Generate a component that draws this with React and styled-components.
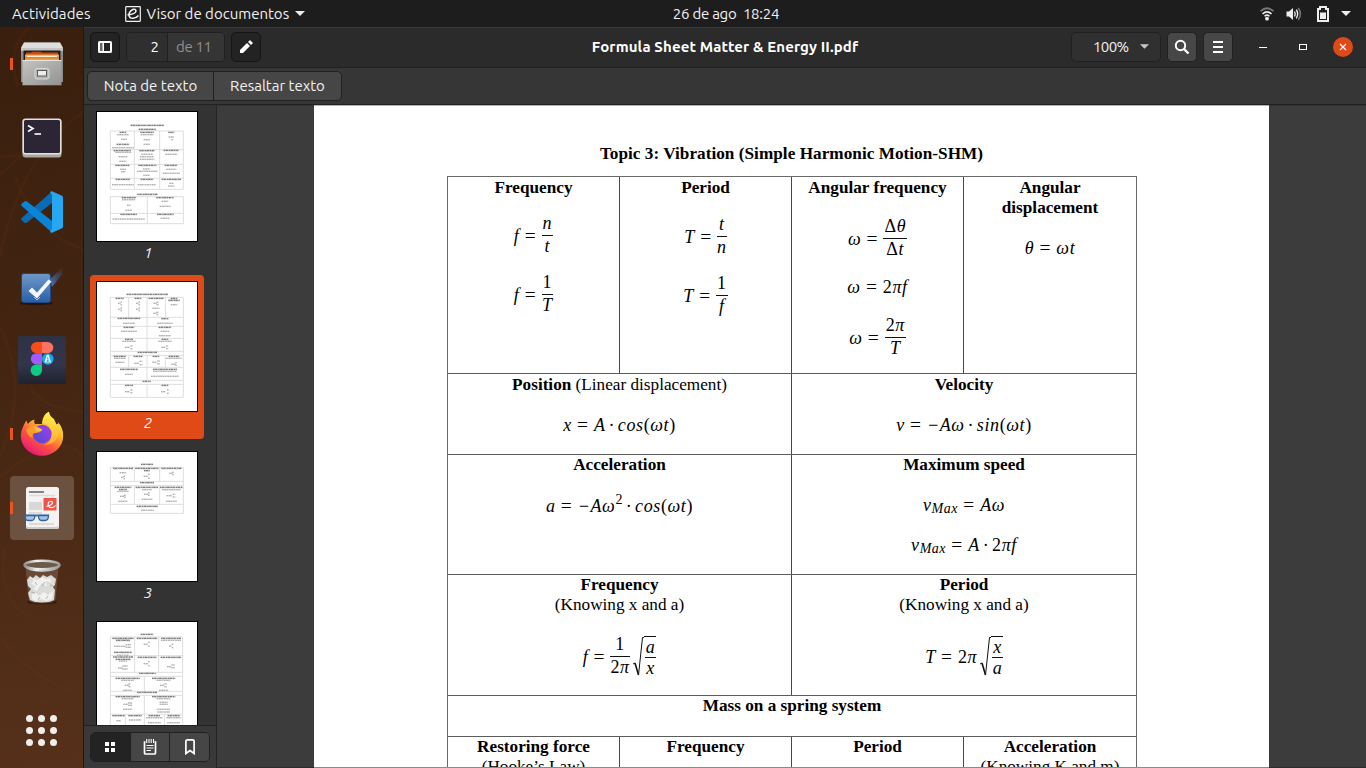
import React from 'react';
import styled, { createGlobalStyle } from 'styled-components';

const Global = createGlobalStyle`
  * { box-sizing: border-box; }
  html, body { margin: 0; padding: 0; width: 1366px; height: 768px; overflow: hidden; background: #1d1d1d; }
  svg { display: block; }
`;

const UI = '"Ubuntu", "Noto Sans", "Open Sans", sans-serif';
const SERIF = '"Liberation Serif", "Times New Roman", serif';

const Desktop = styled.div`
  width: 1366px;
  height: 768px;
  display: flex;
  flex-direction: column;
  overflow: hidden;
  font-family: ${UI};
  font-size: 15px;
  color: #f2f2f2;
`;

const Label = styled.span`
  white-space: pre;
  letter-spacing: ${(p) => p.$ls || 0}px;
  font-weight: ${(p) => (p.$bold ? 700 : 400)};
  font-size: 15px;
`;

/* ---------- top panel ---------- */
const TopBar = styled.header`
  height: 27px;
  flex: none;
  background: #1d1d1d;
  display: grid;
  grid-template-columns: 1fr auto 1fr;
  align-items: center;
  line-height: 26px;
`;
const TopLeft = styled.div`
  display: flex;
  align-items: center;
  padding-left: 12px;
`;
const AppMenu = styled.div`
  display: flex;
  align-items: center;
  margin-left: 34px;
  gap: 6px;
`;
const Clock = styled.div`
  padding-left: 86px;
`;
const TopRight = styled.div`
  display: flex;
  align-items: center;
  justify-content: flex-end;
  padding-right: 15px;
`;
const Tray = styled.span`
  display: block;
  margin-left: ${(p) => p.$gap}px;
`;

/* ---------- dock ---------- */
const Body = styled.div`
  flex: 1;
  display: flex;
  min-height: 0;
`;
const Dock = styled.nav`
  width: 84px;
  flex: none;
  position: relative;
  display: flex;
  flex-direction: column;
  background: linear-gradient(170deg, #3a1f0e 0%, #422411 40%, #4d2b16 72%, #56301a 100%);
  border-right: 1px solid #22160e;
`;
const DockArt = styled.svg`
  position: absolute;
  inset: 0;
`;
const DockItem = styled.div`
  position: relative;
  height: 74px;
  width: 84px;
  flex: none;
  display: flex;
  align-items: center;
  padding-left: 10px;
`;
const DockTile = styled.div`
  width: 64px;
  height: 64px;
  border-radius: 4px;
  display: flex;
  align-items: center;
  justify-content: center;
  background: ${(p) => (p.$active ? 'rgba(255,255,255,0.19)' : 'transparent')};
`;
const Running = styled.i`
  position: absolute;
  left: 10px;
  top: 31px;
  width: 3px;
  height: 12px;
  background: #e95420;
`;
const DockSpacer = styled.div`
  flex: 1;
`;
const AppsGrid = styled.div`
  position: relative;
  width: 31px;
  margin: 0 0 22px 26px;
  display: grid;
  grid-template-columns: repeat(3, 7px);
  gap: 5px;
  span {
    width: 7px;
    height: 7px;
    border-radius: 50%;
    background: #f0eeec;
  }
`;

/* ---------- window ---------- */
const Window = styled.main`
  flex: 1;
  display: flex;
  flex-direction: column;
  min-width: 0;
  background: #353535;
`;
const HeaderBar = styled.div`
  height: 41px;
  flex: none;
  display: flex;
  align-items: center;
  background: #2b2b2b;
  border-top: 1px solid #3a3a3a;
  border-bottom: 1px solid #212121;
  padding: 0 13px 2px 6px;
`;
const Btn = styled.div`
  height: 30px;
  width: 30px;
  display: flex;
  align-items: center;
  justify-content: center;
  border: 1px solid ${(p) => (p.$dark ? '#151515' : '#212121')};
  border-radius: 5px;
  background: ${(p) => (p.$dark ? '#232323' : '#474747')};
`;
const PageEntry = styled.div`
  display: flex;
  height: 30px;
  width: 99px;
  margin: 0 6px;
  border: 1px solid #202020;
  border-radius: 5px;
  overflow: hidden;
  line-height: 28px;
`;
const PageNo = styled.div`
  width: 41px;
  background: #2f2f2f;
  border-right: 1px solid #202020;
  text-align: right;
  padding-right: 8px;
  color: #fff;
`;
const PageTotal = styled.div`
  flex: 1;
  background: #353535;
  color: #8f8f8f;
  padding-left: 8px;
`;
const Title = styled.div`
  flex: 1;
  display: flex;
  justify-content: center;
  padding-left: 118px;
  color: #fff;
`;
const ZoomBox = styled.div`
  width: 90px;
  height: 30px;
  border: 1px solid #202020;
  border-radius: 5px;
  background: #303030;
  display: flex;
  align-items: center;
  padding: 0 11px 0 21px;
  justify-content: space-between;
`;
const HeaderRight = styled.div`
  display: flex;
  align-items: center;
  > * + * { margin-left: 6px; }
`;
const WinControls = styled.div`
  display: flex;
  align-items: center;
  padding-left: 14px;
  gap: 20px;
`;
const WinBtn = styled.div`
  width: 20px;
  height: 20px;
  border-radius: 50%;
  background: ${(p) => (p.$close ? '#e04a17' : 'transparent')};
`;
const NoteBar = styled.div`
  height: 37px;
  flex: none;
  display: flex;
  align-items: center;
  padding-left: 3px;
  background: #363636;
  border-bottom: 1px solid #222;
`;
const NoteButtons = styled.div`
  display: flex;
  height: 30px;
  border: 1px solid #212121;
  border-radius: 5px;
  background: #464646;
  line-height: 28px;
`;
const NoteButton = styled.div`
  width: ${(p) => p.$w}px;
  text-align: center;
  & + & { border-left: 1px solid #212121; }
`;
const Content = styled.div`
  flex: 1;
  display: flex;
  min-height: 0;
`;

/* ---------- sidebar ---------- */
const Sidebar = styled.aside`
  width: 133px;
  flex: none;
  display: flex;
  flex-direction: column;
  background: #333333;
  border-right: 1px solid #242424;
`;
const ThumbList = styled.div`
  flex: 1;
  min-height: 0;
  overflow: hidden;
`;
const ThumbItem = styled.div`
  width: 114px;
  height: 164px;
  margin: 0 0 6px 6px;
  padding: 6px 6px 0;
  border-radius: 4px;
  background: ${(p) => (p.$selected ? '#e04a17' : 'transparent')};
`;
const ThumbLabel = styled.div`
  text-align: center;
  font-style: italic;
  line-height: 22px;
  padding-left: 2px;
  color: #f4f4f4;
`;
const SideTools = styled.div`
  height: 43px;
  flex: none;
  padding: 6px;
  background: #393939;
  border-top: 1px solid #222;
`;
const Segments = styled.div`
  display: flex;
  height: 30px;
  width: 120px;
  border: 1px solid #202020;
  border-radius: 5px;
  overflow: hidden;
`;
const Segment = styled.div`
  flex: 1;
  display: flex;
  align-items: center;
  justify-content: center;
  background: ${(p) => (p.$on ? '#232323' : '#464646')};
  & + & { border-left: 1px solid #202020; }
`;

/* ---------- document ---------- */
const Viewer = styled.section`
  flex: 1;
  background: #3c3c3c;
  padding-left: 97px;
  overflow: hidden;
  box-shadow: inset 0 1px 0 #323232, inset 0 -1px 0 #2b2b2b;
`;
const Paper = styled.article`
  width: 955px;
  height: 663px;
  background: #fff;
  color: #000;
  padding: 38px 133px 0;
  font-family: ${SERIF};
  font-size: 17.2px;
  line-height: 20px;
  border-top: 1px solid #b5b5b5;
  border-bottom: 1px solid #8a8a8a;
  overflow: hidden;
`;
const Heading = styled.h1`
  margin: 0 0 12px;
  font-size: 17.2px;
  letter-spacing: 0.03px;
  font-weight: 700;
  text-align: center;
  line-height: 20px;
  white-space: nowrap;
`;
const Table = styled.div`
  width: 690px;
  border: 1px solid #6a6a6a;
  border-bottom: 0;
`;
const Row = styled.div`
  display: grid;
  height: ${(p) => p.$h}px;
  grid-template-columns: ${(p) => p.$cols};
  & + & { border-top: 1px solid #5c5c5c; }
`;
const Cell = styled.div`
  display: flex;
  flex-direction: column;
  align-items: center;
  text-align: center;
  white-space: nowrap;
  padding-top: ${(p) => p.$pt || 0}px;
  & + & { border-left: 1px solid #484848; }
`;
const Strong = styled.b`
  display: block;
`;
const Plain = styled.span`
  font-weight: 400;
`;
const Eq = styled.div`
  display: flex;
  align-items: center;
  height: ${(p) => p.$h || 20}px;
  margin-top: ${(p) => p.$mt || 0}px;
  font-style: italic;
  font-size: 18px;
  letter-spacing: 0.6px;
  white-space: pre;
`;
const Up = styled.span`
  font-style: normal;
`;
const Equals = styled.span`
  font-style: normal;
  font-size: 19.5px;
  margin: 0 5.3px 0 5.3px;
`;
const Dot = styled.span`
  font-style: normal;
  margin: 0 2.8px;
`;
const FracBox = styled.span`
  display: inline-flex;
  flex-direction: column;
  align-items: center;
`;
const Num = styled.span`
  height: ${(p) => p.$h || 20}px;
  line-height: ${(p) => p.$lh || 14}px;
  padding: 0 1px;
  align-self: stretch;
  text-align: center;
  border-bottom: 1px solid #111;
`;
const Den = styled.span`
  height: 20px;
  line-height: 21px;
`;
const Small = styled.span`
  font-size: 14px;
  letter-spacing: 0.5px;
  position: relative;
  top: ${(p) => p.$y}px;
`;
const RootBox = styled.span`
  display: flex;
  align-items: center;
  margin-left: 3px;
`;
const RootBody = styled.span`
  border-top: 1px solid #111;
  padding-left: 1px;
`;

const Frac = ({ n, d, h, lh }) => (
  <FracBox>
    <Num $h={h} $lh={lh}>{n}</Num>
    <Den>{d}</Den>
  </FracBox>
);
const Root = ({ children }) => (
  <RootBox>
    <svg width="11" height="40" viewBox="0 0 11 40" fill="none" stroke="#111">
      <path d="M0 27 L2 26" strokeWidth="1" />
      <path d="M2 26 L5.500 38" strokeWidth="1.600" />
      <path d="M5.500 38 L9.500 0.500 H11" strokeWidth="1" />
    </svg>
    <RootBody>{children}</RootBody>
  </RootBox>
);

/* ---------- page thumbnails ---------- */
const thumbs = [
  {
    h: [[93, 79, 298], [149, 79, 298], [193, 79, 298], [235, 79, 298], [268, 79, 298], [290, 79, 298], [340, 79, 298], [371, 79, 298]],
    v: [[79, 93, 268], [151, 93, 268], [227, 93, 268], [298, 93, 268], [79, 290, 371], [190, 290, 371], [298, 290, 371]],
    b: [[190, 76, 100], [190, 88, 52], [117, 97, 20], [189, 97, 40], [262, 97, 18], [117, 133, 38], [115, 152, 52], [189, 152, 46], [261, 151, 44], [115, 196, 42], [190, 196, 54], [261, 196, 38], [116, 238, 42], [189, 238, 38], [262, 238, 58], [190, 283, 60], [134, 293, 42], [243, 293, 52], [134, 343, 50], [244, 343, 50]],
    t: [[117, 104, 35], [189, 104, 38], [120, 118, 18], [189, 119, 20], [262, 111, 16], [265, 119, 6], [189, 133, 20], [117, 143, 66], [118, 157, 48], [117, 170, 26], [189, 163, 34], [189, 170, 42], [189, 178, 44], [262, 163, 36], [117, 184, 22], [117, 208, 18], [118, 215, 14], [188, 207, 22], [190, 214, 62], [188, 226, 20], [262, 208, 30], [262, 220, 52], [117, 254, 66], [188, 254, 54], [262, 250, 12], [262, 258, 20], [134, 299, 40], [134, 316, 10], [134, 331, 20], [243, 304, 20], [243, 319, 32], [134, 357, 96], [243, 355, 26]],
  },
  {
    h: [82, 142, 169, 205, 244, 256, 292, 331, 343, 382].map((y) => [y, 79, 298]),
    v: [[79, 82, 382], [298, 82, 382], [134, 82, 142], [189, 82, 244], [244, 82, 142], [134, 256, 292], [189, 256, 331], [244, 256, 292], [189, 343, 382]],
    b: [[190, 73, 124], [107, 85, 24], [162, 85, 20], [216, 85, 44], [270, 85, 20], [270, 91, 34], [135, 145, 68], [243, 146, 22], [135, 172, 32], [243, 172, 38], [135, 208, 24], [243, 208, 20], [190, 247, 58], [107, 259, 36], [162, 259, 26], [216, 259, 20], [270, 259, 32], [135, 298, 54], [243, 298, 72], [188, 334, 24], [135, 346, 24], [243, 346, 20]],
    t: [[106, 100, 8], [112, 96, 4], [112, 104, 4], [106, 118, 8], [112, 114, 4], [112, 122, 4], [160, 100, 8], [166, 96, 4], [166, 104, 4], [160, 118, 8], [166, 114, 4], [166, 122, 4], [213, 100, 10], [221, 97, 7], [221, 104, 7], [216, 115, 22], [213, 130, 10], [221, 127, 7], [221, 134, 5], [270, 104, 20], [135, 160, 36], [243, 160, 46], [135, 184, 48], [243, 184, 26], [243, 197, 36], [135, 214, 40], [243, 214, 40], [130, 232, 14], [143, 228, 7], [143, 236, 7], [238, 232, 12], [250, 228, 7], [250, 236, 7], [107, 265, 34], [108, 277, 26], [158, 280, 14], [171, 274, 8], [171, 284, 8], [211, 277, 12], [224, 273, 8], [224, 281, 8], [270, 265, 46], [268, 283, 12], [276, 278, 4], [276, 286, 4], [135, 313, 24], [243, 304, 70], [243, 319, 84], [130, 365, 14], [143, 360, 7], [143, 368, 7], [238, 365, 14], [252, 360, 6], [252, 370, 6]],
  },
  {
    h: [82, 124, 137, 193, 220].map((y) => [y, 79, 298]),
    v: [[79, 82, 220], [298, 82, 220], [151, 82, 124], [227, 82, 124], [151, 137, 193], [227, 137, 193]],
    b: [[189, 73, 36], [117, 85, 60], [189, 85, 70], [262, 85, 60], [189, 92, 18], [189, 128, 42], [117, 142, 50], [117, 149, 24], [189, 142, 68], [262, 142, 68], [190, 199, 64]],
    t: [[117, 98, 20], [115, 112, 8], [121, 109, 4], [121, 116, 4], [185, 109, 12], [195, 103, 6], [195, 115, 6], [260, 100, 10], [267, 97, 5], [267, 104, 5], [117, 154, 34], [189, 149, 30], [262, 149, 56], [114, 169, 12], [123, 166, 6], [123, 172, 6], [186, 163, 12], [195, 158, 6], [195, 166, 6], [256, 167, 16], [270, 163, 8], [270, 171, 8], [117, 184, 28], [189, 178, 32], [262, 184, 32], [190, 211, 38]],
  },
  {
    h: [81, 137, 187, 199, 244, 256, 313].map((y) => [y, 79, 296]),
    v: [[79, 81, 380], [296, 81, 380], [152, 81, 187], [224, 81, 187], [181, 199, 244], [181, 256, 380], [124, 313, 380], [241, 313, 380]],
    b: [[189, 73, 38], [117, 85, 64], [117, 91, 42], [189, 85, 62], [261, 85, 60], [117, 127, 54], [117, 141, 60], [117, 148, 44], [189, 142, 56], [261, 142, 62], [190, 190, 50], [131, 205, 72], [239, 205, 70], [189, 247, 60], [131, 260, 72], [239, 260, 70], [104, 317, 38], [153, 317, 40], [211, 317, 34], [269, 317, 36]],
    t: [[261, 91, 60], [107, 109, 34], [133, 104, 16], [133, 112, 16], [185, 103, 12], [195, 97, 5], [195, 109, 5], [259, 108, 8], [266, 103, 5], [266, 113, 5], [117, 136, 36], [117, 153, 24], [109, 174, 14], [123, 168, 16], [123, 177, 16], [185, 161, 12], [195, 155, 5], [195, 167, 5], [255, 170, 12], [267, 165, 10], [267, 173, 10], [131, 211, 38], [239, 211, 42], [128, 226, 12], [137, 222, 6], [137, 230, 6], [234, 226, 12], [245, 222, 8], [245, 230, 8], [131, 241, 28], [239, 241, 28], [131, 266, 36], [239, 266, 42], [125, 283, 14], [138, 279, 12], [138, 286, 12], [239, 277, 24], [239, 283, 24], [131, 298, 28], [239, 298, 38], [239, 306, 38], [211, 323, 50], [269, 323, 44], [104, 332, 14], [153, 330, 36], [211, 338, 38], [269, 338, 38]],
  },
];

const strokesOf = (items) => items.map(([x, y, w]) => `M${x - w / 2} ${y}H${x + w / 2}`).join('');

const Thumb = ({ data }) => (
  <svg width="102" height="131" viewBox="36 33 306 393">
    <rect x="37.500" y="34.500" width="303" height="390" fill="#fff" stroke="#000" strokeWidth="3" />
    <g stroke="#dedede" strokeWidth="3">
      {data.h.map(([y, a, b], i) => <path key={i} d={`M${a} ${y}H${b}`} />)}
      {data.v.map(([x, a, b], i) => <path key={'v' + i} d={`M${x} ${a}V${b}`} />)}
    </g>
    <path d={strokesOf(data.b)} stroke="#c4c4c4" strokeWidth="5" />
    <path d={strokesOf(data.b)} stroke="#555" strokeWidth="2.400" strokeDasharray="4 2.500 6 4 3 2 7 3" />
    <path d={strokesOf(data.t)} stroke="#dadada" strokeWidth="4.500" />
    <path d={strokesOf(data.t)} stroke="#9a9a9a" strokeWidth="2.400" strokeDasharray="4 3 5 2.500 3 4" />
  </svg>
);

/* ---------- icons ---------- */
const Caret = ({ w = 10, c = '#eee' }) => (
  <svg width={w} height="5" viewBox="0 0 10 5"><path d="M0 0H10L5 5Z" fill={c} /></svg>
);

const FilesIcon = () => (
  <svg width="44" height="46" viewBox="0 0 44 46">
    <defs>
      <linearGradient id="cab" x1="0" y1="0" x2="1" y2="1"><stop offset="0" stopColor="#c4c4c2" /><stop offset="1" stopColor="#929290" /></linearGradient>
    </defs>
    <path d="M4 1.500H40L43 7V41H1V7Z" fill="#8c8c8a" />
    <path d="M4 1.500H40L43 7H1Z" fill="#dededc" />
    <path d="M1 7H43V10H1Z" fill="#c4c4c2" />
    <rect x="3.500" y="9.500" width="37" height="10" fill="#231d19" />
    <path d="M6 11.500H11L12 10.800H21L22 11.500H38V19H6Z" fill="#c94a18" />
    <rect x="5" y="13.500" width="34" height="6" fill="#f0a04a" />
    <rect x="7" y="14.700" width="30" height="1.500" fill="#fff0c8" />
    <rect x="5" y="16.200" width="34" height="1.300" fill="#dc7a28" />
    <path d="M2.500 19H41.500V44.500H2.500Z" fill="url(#cab)" />
    <path d="M2.500 19.500H41.500" stroke="#e4e4e2" />
    <path d="M3 44.500H41" stroke="#42321f" opacity=".6" />
    <rect x="15" y="27.500" width="14" height="10.500" rx="2" fill="#b4b4b2" stroke="#d8d8d6" />
    <rect x="17.500" y="29.500" width="9" height="5.500" fill="#ededeb" stroke="#5a5a58" />
  </svg>
);
const TerminalIcon = () => (
  <svg width="40" height="40" viewBox="0 0 40 40">
    <rect x="0.500" y="1" width="39" height="38.500" rx="3" fill="#a9a7a2" />
    <rect x="0.500" y="0.500" width="39" height="36" rx="3" fill="#e4e2dd" />
    <rect x="2" y="2" width="36" height="33" rx="1.500" fill="#2b2535" />
    <path d="M6 7.500L11 10.500L6 13.500" fill="none" stroke="#fff" strokeWidth="1.600" />
    <path d="M12.500 16H19" stroke="#fff" strokeWidth="1.600" />
  </svg>
);
const CodeIcon = () => (
  <svg width="42" height="42" viewBox="0 0 42 42">
    <path d="M31 0.500L0.700 27Q-0.300 28 .6 29.200L3.700 31.700Q5 32.300 6 31.500L31 12Z" fill="#0b6cb3" />
    <path d="M31 41.500L0.700 15Q-0.300 13.800 .6 12.800L3.700 10.200Q5 9.700 6 10.500L31 30Z" fill="#0a84d6" />
    <path d="M31 0.200L41 4.800Q42 5.300 42 6.500V35.500Q42 36.700 41 37.200L31 41.800Q29.800 42 29 40.800L31 38V4L29 1.200Q29.800 0 31 .2Z" fill="#27a7f2" />
  </svg>
);
const TodoIcon = () => (
  <svg width="44" height="40" viewBox="0 0 44 40">
    <defs>
      <linearGradient id="todo" x1="0" y1="0" x2="0" y2="1"><stop offset="0" stopColor="#7099cb" /><stop offset="1" stopColor="#2a5fa6" /></linearGradient>
      <linearGradient id="pen" x1="0" y1="1" x2="1" y2="0"><stop offset="0" stopColor="#4d7cc0" /><stop offset="1" stopColor="#3a4f80" stopOpacity=".15" /></linearGradient>
    </defs>
    <ellipse cx="16" cy="37" rx="17" ry="2.200" fill="#1d0f07" opacity=".7" />
    <rect x="1.500" y="7.500" width="29" height="29" rx="2.500" fill="url(#todo)" stroke="#1f4684" />
    <path d="M30 13L42.500 1.500V8L32 21Z" fill="url(#pen)" />
    <path d="M8.500 25L12 21.500L17 26.500L28.500 13.500L31.500 15.500L17 32.500Z" fill="#f5f5f5" />
    <path d="M14 31L17 34L20 31" fill="none" stroke="#c7d6ea" strokeWidth=".8" />
  </svg>
);
const FigmaIcon = () => (
  <svg width="48" height="48" viewBox="0 0 48 48">
    <defs>
      <linearGradient id="fig" x1="0" y1="0" x2="0" y2="1"><stop offset="0" stopColor="#2f3245" /><stop offset=".6" stopColor="#33364a" /><stop offset="1" stopColor="#20222f" /></linearGradient>
    </defs>
    <rect width="48" height="48" rx="2.500" fill="url(#fig)" />
    <path d="M24 6H18.500A5.600 5.600 0 0 0 18.500 17.200H24Z" fill="#f24e1e" />
    <path d="M24 6H29.700A5.600 5.600 0 0 1 29.700 17.200H24Z" fill="#ff7262" />
    <path d="M24 17.200H18.500A5.600 5.600 0 0 0 18.500 28.500H24Z" fill="#a259ff" />
    <path d="M24 28.500H18.500A5.700 5.700 0 1 0 24 34.200Z" fill="#0acf83" />
    <circle cx="29.800" cy="23" r="5.800" fill="#18a8f0" />
    <path d="M29.500 19L27.200 26.500M30.100 19L32.400 26.500" stroke="#fff" strokeWidth="1.300" />
    <circle cx="29.800" cy="25" r="1.500" fill="none" stroke="#fff" strokeWidth=".7" />
  </svg>
);
const FirefoxIcon = () => (
  <svg width="44" height="47" viewBox="0 0 44 47">
    <defs>
      <linearGradient id="ff1" x1=".85" y1=".05" x2=".25" y2="1"><stop offset="0" stopColor="#fff14a" /><stop offset=".35" stopColor="#ffb52e" /><stop offset=".62" stopColor="#ff5a3c" /><stop offset="1" stopColor="#e5127d" /></linearGradient>
      <linearGradient id="ff2" x1="1" y1="0" x2="0" y2="1"><stop offset="0" stopColor="#a43cf0" /><stop offset="1" stopColor="#4a4fc8" /></linearGradient>
      <linearGradient id="ff3" x1="0" y1="0" x2="0" y2="1"><stop offset="0" stopColor="#fff24d" /><stop offset="1" stopColor="#ffb02e" /></linearGradient>
    </defs>
    <path d="M3 16Q5 11 6.500 9.500Q7 11.500 8 13Q10 9.500 14.500 8.500Q13.500 11 15 13L22 13Q23 3 29 0.800Q29 4.500 34 8L36 13.500L38.500 12.500L37.500 10.500Q43.500 17 43.200 25A21.200 19.800 0 0 1 .8 25Q.7 20 3 16Z" fill="url(#ff1)" />
    <path d="M29 0.800Q23 3.500 22 12Q31 13 31.500 22Q32 31 24 34Q38 33 38 22Q38 13 33 8Q29 5 29 .8Z" fill="url(#ff3)" opacity=".85" />
    <circle cx="22.300" cy="23" r="9.300" fill="url(#ff2)" />
    <path d="M6 19Q11 13 16 15Q20 18 22.500 18.500Q21 21.500 16 22Q11 22 13 27Q7 25 6 19Z" fill="#ff9a2c" />
    <path d="M14 15.500Q20 17 22.500 18.700Q20 20.500 16 20.500Z" fill="#ffc04a" />
  </svg>
);
const EvinceIcon = () => (
  <svg width="40" height="44" viewBox="0 0 40 44">
    <rect x="4" y="1" width="33" height="42" rx="2.500" fill="#f4f3f1" />
    <path d="M4 39V40.500Q4 43 6.500 43H34.500Q37 43 37 40.500V39Q37 41 34.500 41H6.500Q4 41 4 39Z" fill="#cfccc8" />
    <path d="M7 6H22" stroke="#6b6870" strokeWidth="1.600" />
    <path d="M7 9.500H33" stroke="#dddbd8" strokeWidth="1.500" />
    <rect x="7" y="16" width="13" height="8" fill="#dad8d5" />
    <path d="M7 27H20M7 38H32" stroke="#dddbd8" strokeWidth="2" />
    <rect x="21.500" y="12" width="13" height="12.500" fill="#ee5548" />
    <path d="M24.500 20.500Q30.500 19.500 30.500 16.300Q29 14 26.500 16.500Q25 21 29 21.500Q31.500 22 33.500 19.500" fill="none" stroke="#fff" strokeWidth="1.100" />
    <path d="M2 29.500H27" stroke="#2f65a8" strokeWidth="1.800" />
    <path d="M3.500 29.500Q3 34.500 6 34.500H9.500Q12.500 34.500 13 29.500ZM16.500 29.500Q16.500 34.500 19.500 34.500H23Q26.500 34.500 26.500 29.500Z" fill="#a9c3e0" stroke="#2f65a8" strokeWidth="1.300" />
  </svg>
);
const TrashIcon = () => (
  <svg width="40" height="48" viewBox="0 0 40 48">
    <defs><linearGradient id="rim" x1="0" x2="1" y1="0" y2="0"><stop offset="0" stopColor="#8f8f8d" /><stop offset=".35" stopColor="#f2f2f0" /><stop offset="1" stopColor="#9b9b99" /></linearGradient></defs>
    <ellipse cx="20" cy="44" rx="15" ry="2.500" fill="#1f1008" opacity=".6" />
    <path d="M4 9L7 42Q8 45 20 45Q32 45 33 42L36 9Z" fill="#9b8473" opacity=".35" stroke="#b09a8a" strokeWidth=".7" />
    <path d="M5 22L8 18L11 20L14 17L18 20L21 17L25 19L29 17L34 21L33 27L31 29L33 32L32 42Q28 44.500 20 44.500Q12 44.500 8 42L6 35L9 31L6 28Z" fill="#dadad8" />
    <path d="M8 20L12 22L9 26L14 28L11 31L15 33L17 29L20 25L25 29L24 23L30 25L28 20L24 21L20 19L16 22ZM10 36L14 35L17 38L22 34L26 37L31 33L30 41L24 43L20 41L14 43L10 41Z" fill="#f1f1ef" />
    <path d="M13 24L15 27M23 24L20 28M28 27L31 28M9 34L13 35M18 39L16 42M26 38L24 41" stroke="#b0b0ae" strokeWidth="1" />
    <ellipse cx="20" cy="7" rx="17.500" ry="4.300" fill="#6c5a4d" stroke="url(#rim)" strokeWidth="2.500" />
    <path d="M2.500 7.500Q5 13 20 13Q35 13 37.500 7.500" fill="none" stroke="url(#rim)" strokeWidth="1.500" />
  </svg>
);

const dock = [
  { Icon: FilesIcon, run: true },
  { Icon: TerminalIcon },
  { Icon: CodeIcon },
  { Icon: TodoIcon },
  { Icon: FigmaIcon },
  { Icon: FirefoxIcon, run: true },
  { Icon: EvinceIcon, run: true, active: true },
  { Icon: TrashIcon },
];

const FOUR = '171px 172px 172px 173px';
const TWO = '343px 345px';

export default function App() {
  return (
    <Desktop>
      <Global />
      <TopBar>
        <TopLeft>
          <Label $ls={0.12}>Actividades</Label>
          <AppMenu>
            <svg width="16" height="16" viewBox="0 0 16 16" fill="none" stroke="#f2f2f2">
              <rect x="0.700" y="0.700" width="14.600" height="14.600" rx="0.500" strokeWidth="1.200" />
              <path d="M2.500 8.700Q10.500 8.300 11 5Q10.500 2.500 7.800 3.500Q4 5.500 4 9Q4.200 12.500 8 12.300Q11.500 12 13.500 9.500" strokeWidth="1.600" />
            </svg>
            <Label>Visor de documentos</Label>
            <Caret w={10} />
          </AppMenu>
        </TopLeft>
        <Clock><Label $ls={-0.25}>26 de ago  18:24</Label></Clock>
        <TopRight>
          <Tray $gap={0}>
            <svg width="14" height="14" viewBox="0 0 14 14" fill="none">
              <path d="M.5 4.200Q7 -1.600 13.500 4.200" stroke="#777" strokeWidth="1.800" />
              <path d="M2.500 7Q7 2.800 11.500 7" stroke="#eee" strokeWidth="1.700" />
              <path d="M4.500 9.200Q7 7 9.500 9.200" stroke="#eee" strokeWidth="1.500" />
              <circle cx="7" cy="11.700" r="1.900" fill="#eee" />
            </svg>
          </Tray>
          <Tray $gap={12}>
            <svg width="16" height="14" viewBox="0 0 16 14" fill="none">
              <path d="M.5 4.500H3L7 1V13L3 9.500H.5Z" fill="#eee" />
              <path d="M8.500 4.500Q10 7 8.500 9.500M10.300 2.700Q13 7 10.300 11.300" stroke="#eee" strokeWidth="1.400" />
              <path d="M12.300 1Q16.500 7 12.300 13" stroke="#777" strokeWidth="1.500" />
            </svg>
          </Tray>
          <Tray $gap={15}>
            <svg width="12" height="16" viewBox="0 0 12 16">
              <path d="M3 1H9V3H11V15H1V3H3Z" fill="none" stroke="#eee" strokeWidth="2" />
              <rect x="3" y="6.500" width="6" height="6.500" fill="#eee" />
            </svg>
          </Tray>
          <Tray $gap={12}><Caret w={10} /></Tray>
        </TopRight>
      </TopBar>

      <Body>
        <Dock>
          <DockArt width="83" height="741" viewBox="0 0 83 741" fill="none" stroke="#6b3516" strokeWidth="3" opacity=".16">
            <path d="M30 0Q5 20 18 60M83 85Q20 130 0 230M0 130L22 128L0 148M15 150Q40 210 83 222M0 300Q30 360 0 430M30 360Q40 380 83 385M0 450Q60 400 83 430M5 520Q-5 570 30 590M0 610Q40 660 83 665M30 670Q70 680 83 741" />
          </DockArt>
          {dock.map(({ Icon, run, active }, i) => (
            <DockItem key={i}>
              <DockTile $active={active}><Icon /></DockTile>
              {run && <Running />}
            </DockItem>
          ))}
          <DockSpacer />
          <AppsGrid>{Array.from({ length: 9 }, (_, i) => <span key={i} />)}</AppsGrid>
        </Dock>

        <Window>
          <HeaderBar>
            <Btn $dark>
              <svg width="14" height="12" viewBox="0 0 14 12">
                <path d="M1.500 0H12.500Q14 0 14 1.500V10.500Q14 12 12.500 12H1.500Q0 12 0 10.500V1.500Q0 0 1.500 0ZM6 2V10H12V2Z" fill="#fff" fillRule="evenodd" />
                <rect x="2" y="2" width="2.500" height="8" fill="#666" />
              </svg>
            </Btn>
            <PageEntry>
              <PageNo><Label>2</Label></PageNo>
              <PageTotal><Label $ls={-0.35}>de 11</Label></PageTotal>
            </PageEntry>
            <Btn $dark>
              <svg width="14" height="14" viewBox="0 0 14 14" fill="#fff">
                <path d="M1 13V10L8 3L11 6L4 13Z" />
                <path d="M9 2L10.500 .5Q11 0 11.500 .5L13.500 2.500Q14 3 13.500 3.500L12 5Z" />
              </svg>
            </Btn>
            <Title><Label $bold $ls={0.12}>Formula Sheet Matter &amp; Energy II.pdf</Label></Title>
            <HeaderRight>
              <ZoomBox><Label $ls={-0.6}>100%</Label><Caret w={9} c="#c8c8c8" /></ZoomBox>
              <Btn>
                <svg width="16" height="16" viewBox="0 0 16 16" fill="none" stroke="#fff">
                  <circle cx="6.500" cy="6.500" r="4.700" strokeWidth="2" />
                  <path d="M10 10L14.500 14.500" strokeWidth="2.400" />
                </svg>
              </Btn>
              <Btn>
                <svg width="10" height="12" viewBox="0 0 10 12"><path d="M0 1H10M0 6H10M0 11H10" stroke="#fff" strokeWidth="2" /></svg>
              </Btn>
              <WinControls>
                <WinBtn><svg width="20" height="20"><path d="M6 10.500H14" stroke="#fff" /></svg></WinBtn>
                <WinBtn><svg width="20" height="20"><rect x="6.500" y="7.500" width="7" height="5" fill="none" stroke="#fff" /></svg></WinBtn>
                <WinBtn $close><svg width="20" height="20"><path d="M7 7L13 13M13 7L7 13" stroke="#fff" strokeWidth="1.100" /></svg></WinBtn>
              </WinControls>
            </HeaderRight>
          </HeaderBar>

          <NoteBar>
            <NoteButtons>
              <NoteButton $w={125}><Label>Nota de texto</Label></NoteButton>
              <NoteButton $w={128}><Label>Resaltar texto</Label></NoteButton>
            </NoteButtons>
          </NoteBar>

          <Content>
            <Sidebar>
              <ThumbList>
                {thumbs.map((data, i) => (
                  <ThumbItem key={i} $selected={i === 1}>
                    <Thumb data={data} />
                    {i < 3 && <ThumbLabel>{i + 1}</ThumbLabel>}
                  </ThumbItem>
                ))}
              </ThumbList>
              <SideTools>
                <Segments>
                  <Segment $on>
                    <svg width="10" height="10" viewBox="0 0 10 10" fill="#fff"><path d="M0 0H4V4H0ZM6 0H10V4H6ZM0 6H4V10H0ZM6 6H10V10H6Z" /></svg>
                  </Segment>
                  <Segment>
                    <svg width="14" height="16" viewBox="0 0 14 16" fill="none" stroke="#fff">
                      <path d="M2.500 3H1.500V14Q1.500 15 2.500 15H11.500Q12.500 15 12.500 14V3H11.500" strokeWidth="1.700" />
                      <path d="M3.700 0V4M6 0V4M8.200 0V4M10.500 0V4" strokeWidth="1.100" />
                      <path d="M3.500 6.500H10.500M3.500 9H10.500M3.500 11.500H8" strokeWidth="1.200" />
                    </svg>
                  </Segment>
                  <Segment>
                    <svg width="10" height="16" viewBox="0 0 10 16" fill="none" stroke="#fff" strokeWidth="1.700">
                      <path d="M.9 2.300Q.9 .9 2.300 .9H7.700Q9.100 .9 9.100 2.300V14.500L5 11.500L.9 14.500Z" />
                    </svg>
                  </Segment>
                </Segments>
              </SideTools>
            </Sidebar>

            <Viewer>
              <Paper>
                <Heading>Topic 3: Vibration (Simple Harmonic Motion-SHM)</Heading>
                <Table>
                  <Row $h={196} $cols={FOUR}>
                    <Cell $pt={1}>
                      <Strong>Frequency</Strong>
                      <Eq $h={41} $mt={17}>f<Equals>=</Equals><Frac n="n" d="t" /></Eq>
                      <Eq $h={41} $mt={18}>f<Equals>=</Equals><Frac n={<Up>1</Up>} d="T" /></Eq>
                    </Cell>
                    <Cell $pt={1}>
                      <Strong>Period</Strong>
                      <Eq $h={41} $mt={18}>T<Equals>=</Equals><Frac n="t" d="n" /></Eq>
                      <Eq $h={41} $mt={18}>T<Equals>=</Equals><Frac n={<Up>1</Up>} d="f" /></Eq>
                    </Cell>
                    <Cell $pt={1}>
                      <Strong>Angular frequency</Strong>
                      <Eq $h={41} $mt={20}>ω<Equals>=</Equals><Frac n={<><Up>Δ</Up>θ</>} d={<><Up>Δ</Up>t</>} /></Eq>
                      <Eq $mt={18}>ω<Equals>=</Equals><Up>2</Up>πf</Eq>
                      <Eq $h={41} $mt={20}>ω<Equals>=</Equals><Frac n={<><Up>2</Up>π</>} d="T" /></Eq>
                    </Cell>
                    <Cell $pt={1}>
                      <Strong>Angular<br />displacement</Strong>
                      <Eq $mt={20}>θ<Equals>=</Equals>ωt</Eq>
                    </Cell>
                  </Row>
                  <Row $h={81} $cols={TWO}>
                    <Cell $pt={1}>
                      <Strong>Position <Plain>(Linear displacement)</Plain></Strong>
                      <Eq $mt={20}>x<Equals>=</Equals>A<Dot>·</Dot>cos<Up>(</Up>ωt<Up>)</Up></Eq>
                    </Cell>
                    <Cell $pt={1}>
                      <Strong>Velocity</Strong>
                      <Eq $mt={20}>v<Equals>=</Equals>−Aω<Dot>·</Dot>sin<Up>(</Up>ωt<Up>)</Up></Eq>
                    </Cell>
                  </Row>
                  <Row $h={120} $cols={TWO}>
                    <Cell>
                      <Strong>Acceleration</Strong>
                      <Eq $mt={21}>a<Equals>=</Equals>−Aω<Small $y={-6}><Up>2</Up></Small><Dot>·</Dot>cos<Up>(</Up>ωt<Up>)</Up></Eq>
                    </Cell>
                    <Cell>
                      <Strong>Maximum speed</Strong>
                      <Eq $mt={20}>v<Small $y={4}>Max</Small><Equals>=</Equals>Aω</Eq>
                      <Eq $mt={20}>v<Small $y={4}>Max</Small><Equals>=</Equals>A<Dot>·</Dot><Up>2</Up>πf</Eq>
                    </Cell>
                  </Row>
                  <Row $h={121} $cols={TWO}>
                    <Cell>
                      <Strong>Frequency</Strong>
                      <Plain>(Knowing x and a)</Plain>
                      <Eq $h={41} $mt={21}>f<Equals>=</Equals><Frac n={<Up>1</Up>} d={<><Up>2</Up>π</>} /><Root><Frac n="a" d="x" h={19} lh={16} /></Root></Eq>
                    </Cell>
                    <Cell>
                      <Strong>Period</Strong>
                      <Plain>(Knowing x and a)</Plain>
                      <Eq $h={41} $mt={21}>T<Equals>=</Equals><Up>2</Up>π<Root><Frac n="x" d="a" h={19} lh={16} /></Root></Eq>
                    </Cell>
                  </Row>
                  <Row $h={41} $cols="688px">
                    <Cell><Strong>Mass on a spring system</Strong></Cell>
                  </Row>
                  <Row $h={120} $cols={FOUR}>
                    <Cell><Strong>Restoring force</Strong><Plain>(Hooke’s Law)</Plain></Cell>
                    <Cell><Strong>Frequency</Strong></Cell>
                    <Cell><Strong>Period</Strong></Cell>
                    <Cell><Strong>Acceleration</Strong><Plain>(Knowing K and m)</Plain></Cell>
                  </Row>
                </Table>
              </Paper>
            </Viewer>
          </Content>
        </Window>
      </Body>
    </Desktop>
  );
}
